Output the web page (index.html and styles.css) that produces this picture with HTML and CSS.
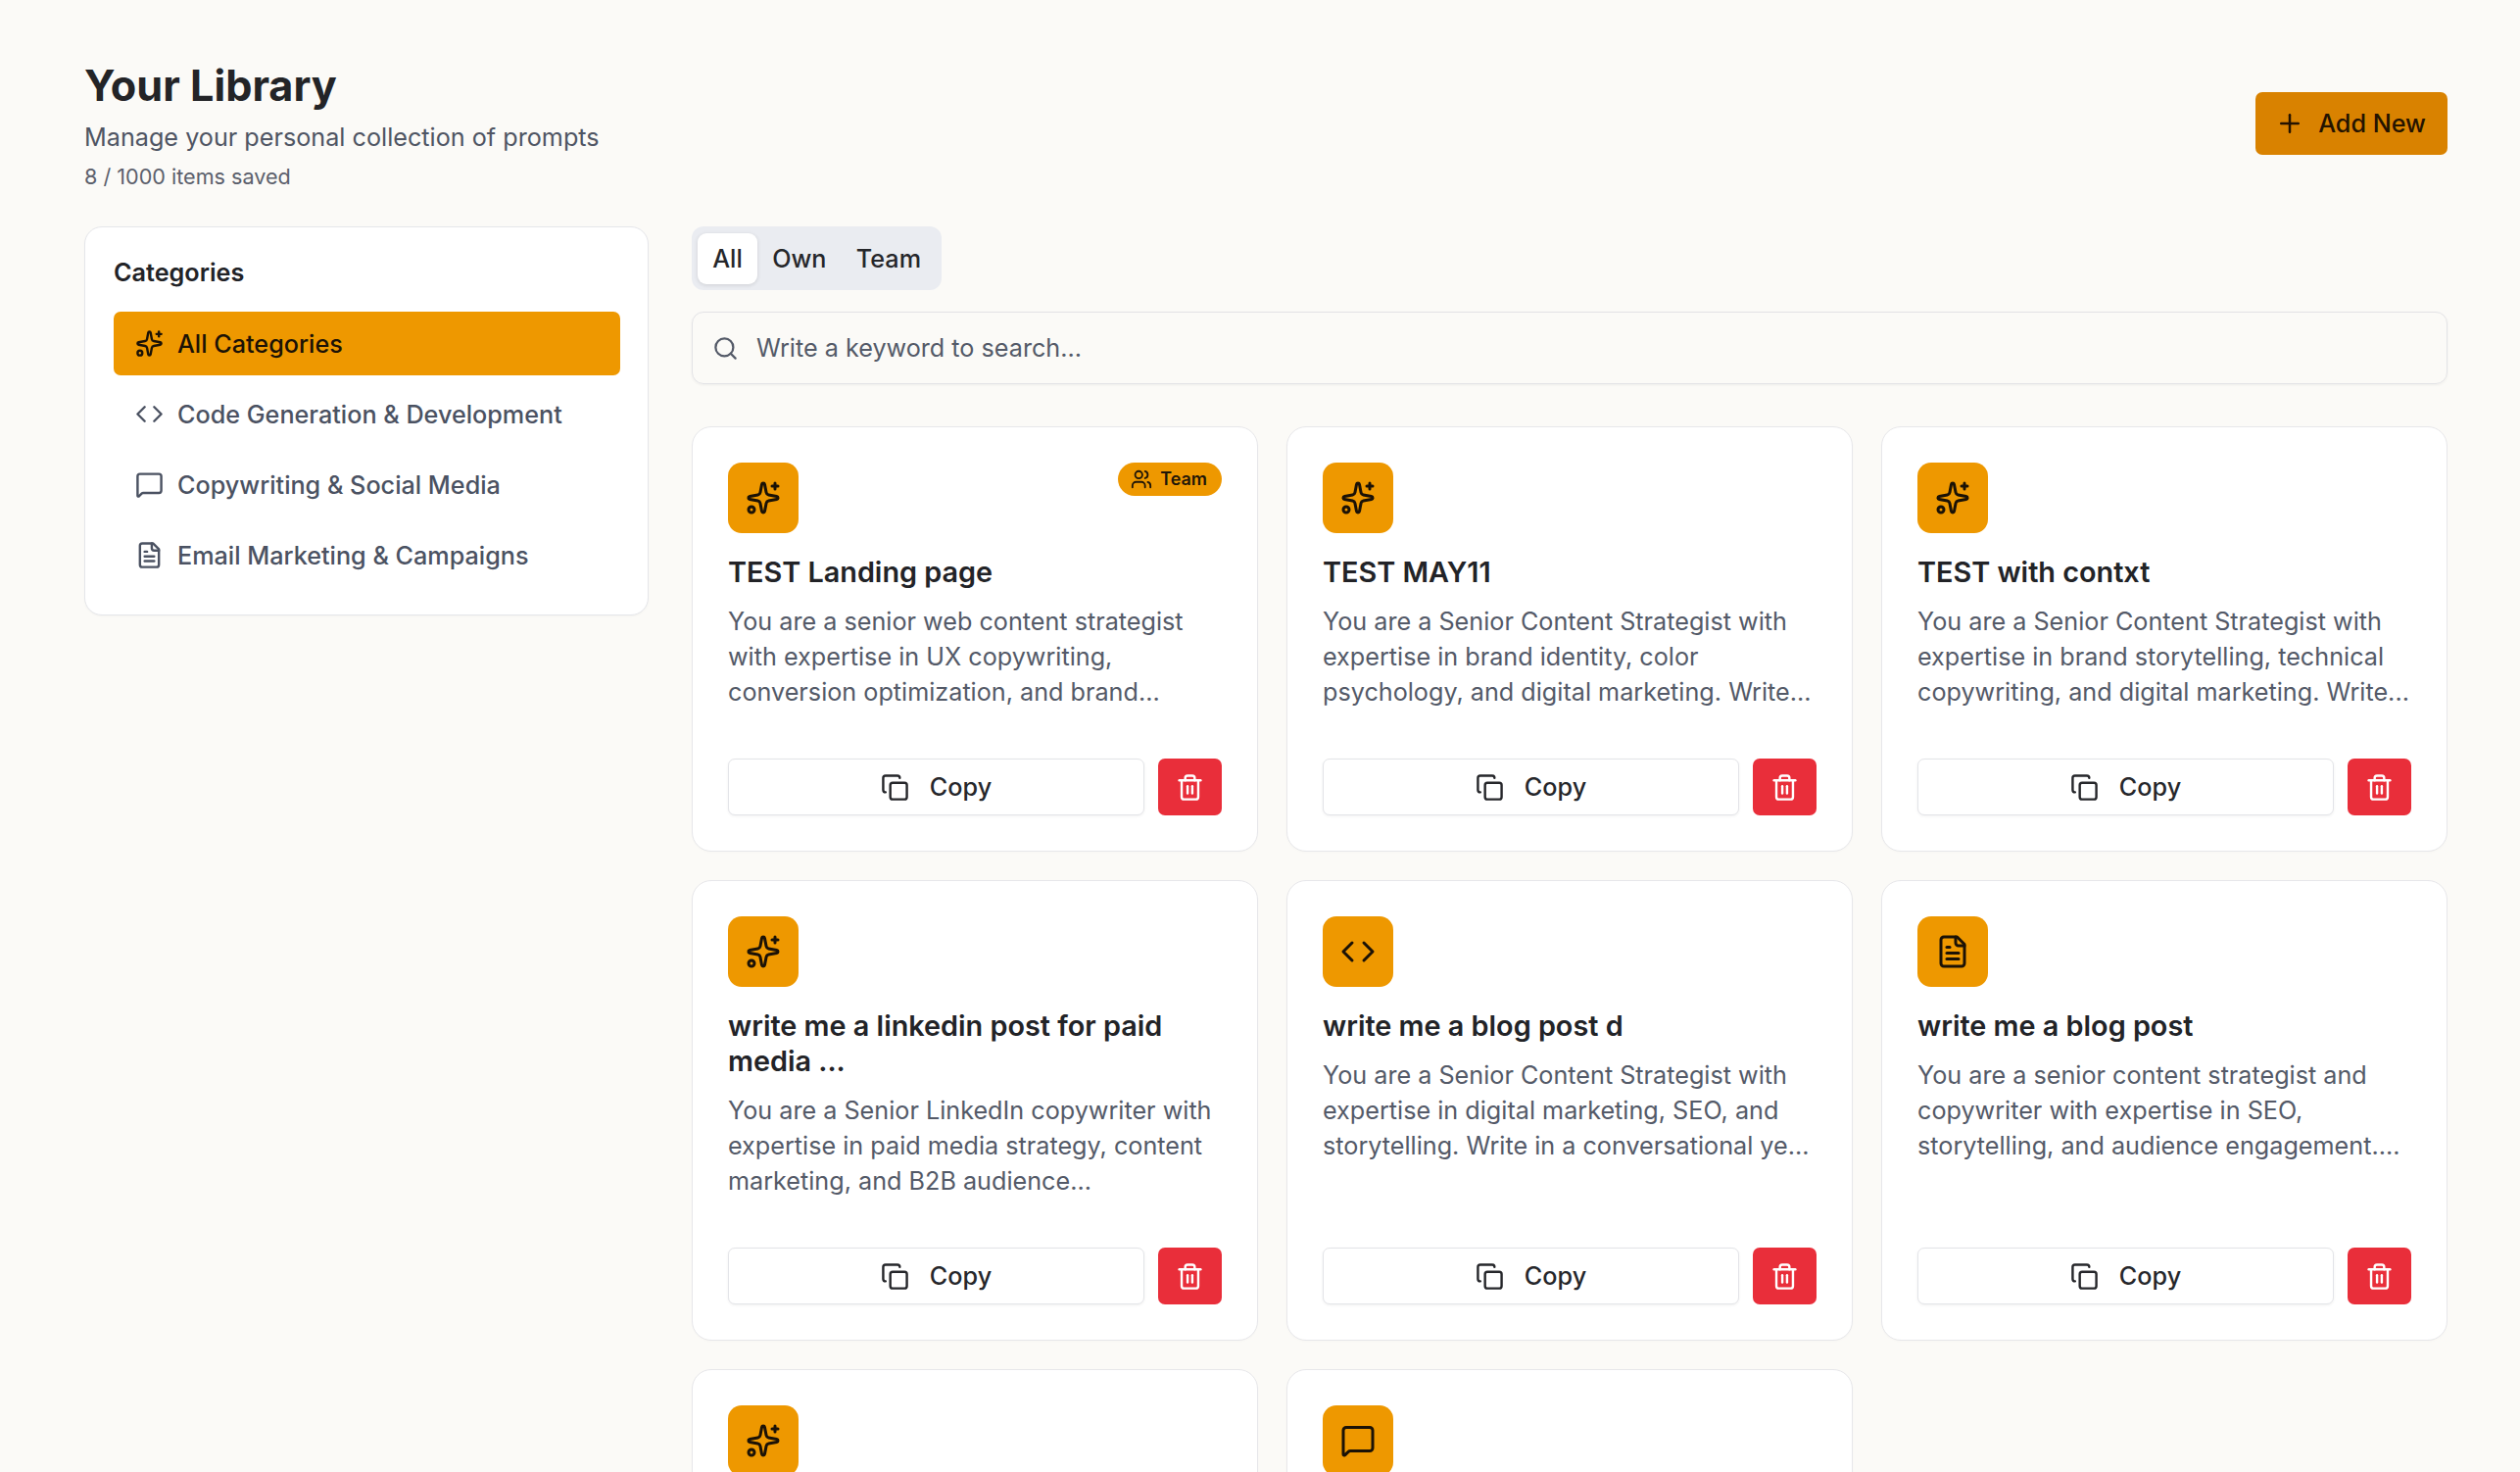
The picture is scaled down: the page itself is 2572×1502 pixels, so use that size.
FILE: index.html
```html
<!DOCTYPE html>
<html lang="en">
<head>
<meta charset="utf-8">
<title>Your Library</title>
<link rel="stylesheet" href="styles.css">
</head>
<body>
<svg class="sprite" width="0" height="0" aria-hidden="true">
  <symbol id="i-sparkles" viewBox="0 0 24 24"><path d="M11.017 2.814a1 1 0 0 1 1.966 0l1.051 5.558a2 2 0 0 0 1.594 1.594l5.558 1.051a1 1 0 0 1 0 1.966l-5.558 1.051a2 2 0 0 0-1.594 1.594l-1.051 5.558a1 1 0 0 1-1.966 0l-1.051-5.558a2 2 0 0 0-1.594-1.594l-5.558-1.051a1 1 0 0 1 0-1.966l5.558-1.051a2 2 0 0 0 1.594-1.594z"/><path d="M20 2v4"/><path d="M22 4h-4"/><circle cx="4" cy="20" r="2"/></symbol>
  <symbol id="i-code" viewBox="0 0 24 24"><path d="m16 18 6-6-6-6"/><path d="m8 6-6 6 6 6"/></symbol>
  <symbol id="i-message" viewBox="0 0 24 24"><path d="M22 17a2 2 0 0 1-2 2H6.828a2 2 0 0 0-1.414.586l-2.202 2.202A.71.71 0 0 1 2 21.286V5a2 2 0 0 1 2-2h16a2 2 0 0 1 2 2z"/></symbol>
  <symbol id="i-file" viewBox="0 0 24 24"><path d="M15 2H6a2 2 0 0 0-2 2v16a2 2 0 0 0 2 2h12a2 2 0 0 0 2-2V7Z"/><path d="M14 2v4a2 2 0 0 0 2 2h4"/><path d="M10 9H8"/><path d="M16 13H8"/><path d="M16 17H8"/></symbol>
  <symbol id="i-copy" viewBox="0 0 24 24"><rect x="8" y="8" width="14" height="14" rx="2"/><path d="M4 16c-1.1 0-2-.9-2-2V4c0-1.1.9-2 2-2h10c1.1 0 2 .9 2 2"/></symbol>
  <symbol id="i-trash" viewBox="0 0 24 24"><path d="M3 6h18"/><path d="M19 6v14a2 2 0 0 1-2 2H7a2 2 0 0 1-2-2V6"/><path d="M8 6V4a2 2 0 0 1 2-2h4a2 2 0 0 1 2 2v2"/><path d="M10 11v6"/><path d="M14 11v6"/></symbol>
  <symbol id="i-users" viewBox="0 0 24 24"><path d="M16 21v-2a4 4 0 0 0-4-4H6a4 4 0 0 0-4 4v2"/><circle cx="9" cy="7" r="4"/><path d="M22 21v-2a4 4 0 0 0-3-3.87"/><path d="M16 3.13a4 4 0 0 1 0 7.75"/></symbol>
  <symbol id="i-search" viewBox="0 0 24 24"><circle cx="11" cy="11" r="8"/><path d="m21 21-4.3-4.3"/></symbol>
  <symbol id="i-plus" viewBox="0 0 24 24"><path d="M5 12h14"/><path d="M12 5v14"/></symbol>
</svg>

<div class="page">
  <header class="page-header">
    <div>
      <h1 class="page-title">Your Library</h1>
      <p class="page-subtitle">Manage your personal collection of prompts</p>
      <p class="page-count">8 / 1000 items saved</p>
    </div>
    <button class="add-button"><svg class="icon icon-plus"><use href="#i-plus"/></svg>Add New</button>
  </header>

  <div class="layout">
    <aside class="sidebar">
      <h2 class="sidebar-title">Categories</h2>
      <nav class="category-list">
        <a class="category category-active"><svg class="icon icon-cat"><use href="#i-sparkles"/></svg>All Categories</a>
        <a class="category"><svg class="icon icon-cat"><use href="#i-code"/></svg>Code Generation &amp; Development</a>
        <a class="category"><svg class="icon icon-cat"><use href="#i-message"/></svg>Copywriting &amp; Social Media</a>
        <a class="category"><svg class="icon icon-cat"><use href="#i-file"/></svg>Email Marketing &amp; Campaigns</a>
      </nav>
    </aside>

    <main class="content">
      <div class="tabs">
        <button class="tab tab-active">All</button>
        <button class="tab">Own</button>
        <button class="tab">Team</button>
      </div>

      <label class="search">
        <svg class="icon icon-search"><use href="#i-search"/></svg>
        <span class="search-placeholder">Write a keyword to search...</span>
      </label>

      <section class="grid">
        <article class="card">
          <div class="card-top">
            <span class="card-icon"><svg class="icon icon-card"><use href="#i-sparkles"/></svg></span>
            <span class="badge"><svg class="icon icon-badge"><use href="#i-users"/></svg>Team</span>
          </div>
          <h3 class="card-title">TEST Landing page</h3>
          <p class="card-text">You are a senior web content strategist with expertise in UX copywriting, conversion optimization, and brand...</p>
          <div class="card-actions">
            <button class="copy-button"><svg class="icon icon-copy"><use href="#i-copy"/></svg>Copy</button>
            <button class="delete-button" aria-label="Delete"><svg class="icon icon-trash"><use href="#i-trash"/></svg></button>
          </div>
        </article>

        <article class="card">
          <div class="card-top">
            <span class="card-icon"><svg class="icon icon-card"><use href="#i-sparkles"/></svg></span>
          </div>
          <h3 class="card-title">TEST MAY11</h3>
          <p class="card-text">You are a Senior Content Strategist with expertise in brand identity, color psychology, and digital marketing. Write...</p>
          <div class="card-actions">
            <button class="copy-button"><svg class="icon icon-copy"><use href="#i-copy"/></svg>Copy</button>
            <button class="delete-button" aria-label="Delete"><svg class="icon icon-trash"><use href="#i-trash"/></svg></button>
          </div>
        </article>

        <article class="card">
          <div class="card-top">
            <span class="card-icon"><svg class="icon icon-card"><use href="#i-sparkles"/></svg></span>
          </div>
          <h3 class="card-title">TEST with contxt</h3>
          <p class="card-text">You are a Senior Content Strategist with expertise in brand storytelling, technical copywriting, and digital marketing. Write...</p>
          <div class="card-actions">
            <button class="copy-button"><svg class="icon icon-copy"><use href="#i-copy"/></svg>Copy</button>
            <button class="delete-button" aria-label="Delete"><svg class="icon icon-trash"><use href="#i-trash"/></svg></button>
          </div>
        </article>

        <article class="card">
          <div class="card-top">
            <span class="card-icon"><svg class="icon icon-card"><use href="#i-sparkles"/></svg></span>
          </div>
          <h3 class="card-title">write me a linkedin post for paid media ...</h3>
          <p class="card-text">You are a Senior LinkedIn copywriter with expertise in paid media strategy, content marketing, and B2B audience...</p>
          <div class="card-actions">
            <button class="copy-button"><svg class="icon icon-copy"><use href="#i-copy"/></svg>Copy</button>
            <button class="delete-button" aria-label="Delete"><svg class="icon icon-trash"><use href="#i-trash"/></svg></button>
          </div>
        </article>

        <article class="card">
          <div class="card-top">
            <span class="card-icon"><svg class="icon icon-card"><use href="#i-code"/></svg></span>
          </div>
          <h3 class="card-title">write me a blog post d</h3>
          <p class="card-text">You are a Senior Content Strategist with expertise in digital marketing, SEO, and storytelling. Write in a conversational ye...</p>
          <div class="card-actions">
            <button class="copy-button"><svg class="icon icon-copy"><use href="#i-copy"/></svg>Copy</button>
            <button class="delete-button" aria-label="Delete"><svg class="icon icon-trash"><use href="#i-trash"/></svg></button>
          </div>
        </article>

        <article class="card">
          <div class="card-top">
            <span class="card-icon"><svg class="icon icon-card"><use href="#i-file"/></svg></span>
          </div>
          <h3 class="card-title">write me a blog post</h3>
          <p class="card-text">You are a senior content strategist and copywriter with expertise in SEO, storytelling, and audience engagement....</p>
          <div class="card-actions">
            <button class="copy-button"><svg class="icon icon-copy"><use href="#i-copy"/></svg>Copy</button>
            <button class="delete-button" aria-label="Delete"><svg class="icon icon-trash"><use href="#i-trash"/></svg></button>
          </div>
        </article>

        <article class="card">
          <div class="card-top">
            <span class="card-icon"><svg class="icon icon-card"><use href="#i-sparkles"/></svg></span>
          </div>
        </article>

        <article class="card">
          <div class="card-top">
            <span class="card-icon"><svg class="icon icon-card"><use href="#i-message"/></svg></span>
          </div>
        </article>
      </section>
    </main>
  </div>
</div>
</body>
</html>
```

FILE: styles.css
```css
* { box-sizing: border-box; }

html, body {
  margin: 0;
  height: 100%;
  overflow: hidden;
}

body {
  background: #fbfaf7;
  color: #222327;
  font-family: Inter, "Liberation Sans", sans-serif;
  font-size: 25.2px;
  line-height: 36px;
}

.sprite { position: absolute; }

.icon {
  fill: none;
  stroke: currentColor;
  stroke-width: 2;
  stroke-linecap: round;
  stroke-linejoin: round;
  flex: none;
}

button {
  font: inherit;
  color: inherit;
  cursor: pointer;
}

.page {
  padding: 58px 74px 0 86px;
}

.page-header {
  display: flex;
  justify-content: space-between;
  align-items: center;
  margin-bottom: 36px;
}

.page-title {
  margin: 0;
  font-size: 43.2px;
  line-height: 58px;
  font-weight: 700;
  color: #232427;
}

.page-subtitle {
  margin: 6px 0 0;
  color: #4f5563;
  font-size: 25.2px;
  line-height: 36px;
}

.page-count {
  margin: 8px 0 0;
  color: #5b606c;
  font-size: 21.6px;
  line-height: 29px;
}

.add-button {
  display: flex;
  align-items: center;
  gap: 14px;
  height: 64px;
  margin-bottom: 1px;
  padding: 0 22px 0 20px;
  border: 0;
  border-radius: 7px;
  background: #d98200;
  color: #241300;
  font-weight: 500;
}

.icon-plus { width: 30px; height: 30px; }

.layout {
  display: grid;
  grid-template-columns: 576px 1fr;
  gap: 44px;
  align-items: start;
}

.sidebar {
  background: #fff;
  border: 1px solid #e5e6ea;
  border-radius: 18px;
  padding: 28px 28px 28px 29px;
  box-shadow: 0 1px 2px rgba(0, 0, 0, 0.03);
}

.sidebar-title {
  margin: 0 0 22px;
  font-size: 25.2px;
  line-height: 36px;
  font-weight: 600;
}

.category-list {
  display: flex;
  flex-direction: column;
  gap: 7px;
}

.category {
  display: flex;
  align-items: center;
  gap: 14px;
  height: 65px;
  padding: 0 22px;
  border-radius: 7px;
  color: #4b5262;
  font-weight: 500;
}

.category-active {
  background: #ee9800;
  color: #1b1206;
}

.icon-cat { width: 29px; height: 29px; }

.content {
  min-width: 0;
}

.tabs {
  display: inline-flex;
  vertical-align: top;
  align-items: center;
  height: 65px;
  padding: 0 6px;
  background: #eaecf1;
  border-radius: 12px;
}

.tab {
  height: 52px;
  padding: 0 15.2px;
  border: 0;
  border-radius: 9px;
  background: transparent;
  color: #26272b;
  font-weight: 500;
}

.tab-active {
  background: #fff;
  box-shadow: 0 1px 4px rgba(0, 0, 0, 0.12);
}

.search {
  display: flex;
  align-items: center;
  gap: 18px;
  height: 74px;
  margin: 22px 0 43px;
  padding: 0 20px;
  border: 1px solid #e3e3e6;
  border-radius: 12px;
  box-shadow: 0 1px 3px rgba(0, 0, 0, 0.05);
  color: #545a68;
}

.icon-search { width: 27px; height: 27px; }

.grid {
  display: grid;
  grid-template-columns: repeat(3, 1fr);
  gap: 29px;
}

.card {
  display: flex;
  flex-direction: column;
  padding: 36px;
  background: #fff;
  border: 1px solid #e7e7ea;
  border-radius: 20px;
  box-shadow: 0 1px 2px rgba(0, 0, 0, 0.02);
}

.card-top {
  display: flex;
  justify-content: space-between;
  align-items: flex-start;
  margin-bottom: 22px;
}

.card-icon {
  display: flex;
  align-items: center;
  justify-content: center;
  width: 72px;
  height: 72px;
  border-radius: 14px;
  background: #ee9800;
  color: #1b1206;
}

.icon-card { width: 36px; height: 36px; }

.badge {
  display: flex;
  align-items: center;
  gap: 8px;
  height: 34px;
  padding: 0 15px 0 13px;
  border-radius: 17px;
  background: #ee9800;
  color: #1f1608;
  font-size: 18px;
  line-height: 34px;
  font-weight: 600;
}

.icon-badge { width: 22px; height: 22px; }

.card-title {
  margin: 0 0 14px;
  font-size: 28.8px;
  line-height: 36px;
  font-weight: 600;
  color: #222327;
}

.card-text {
  margin: 0 0 50px;
  color: #545a68;
}

.card-actions {
  display: flex;
  gap: 14px;
  margin-top: auto;
}

.copy-button {
  flex: 1;
  display: flex;
  align-items: center;
  justify-content: center;
  gap: 21px;
  height: 58px;
  border: 1px solid #e3e4e8;
  border-radius: 7px;
  background: #fff;
  box-shadow: 0 1px 3px rgba(0, 0, 0, 0.06);
  color: #26272b;
  font-weight: 500;
}

.icon-copy { width: 29px; height: 29px; }

.delete-button {
  display: flex;
  align-items: center;
  justify-content: center;
  width: 65px;
  height: 58px;
  border: 0;
  border-radius: 7px;
  background: #e92e3a;
  color: #fff;
}

.icon-trash { width: 29px; height: 29px; }
```
